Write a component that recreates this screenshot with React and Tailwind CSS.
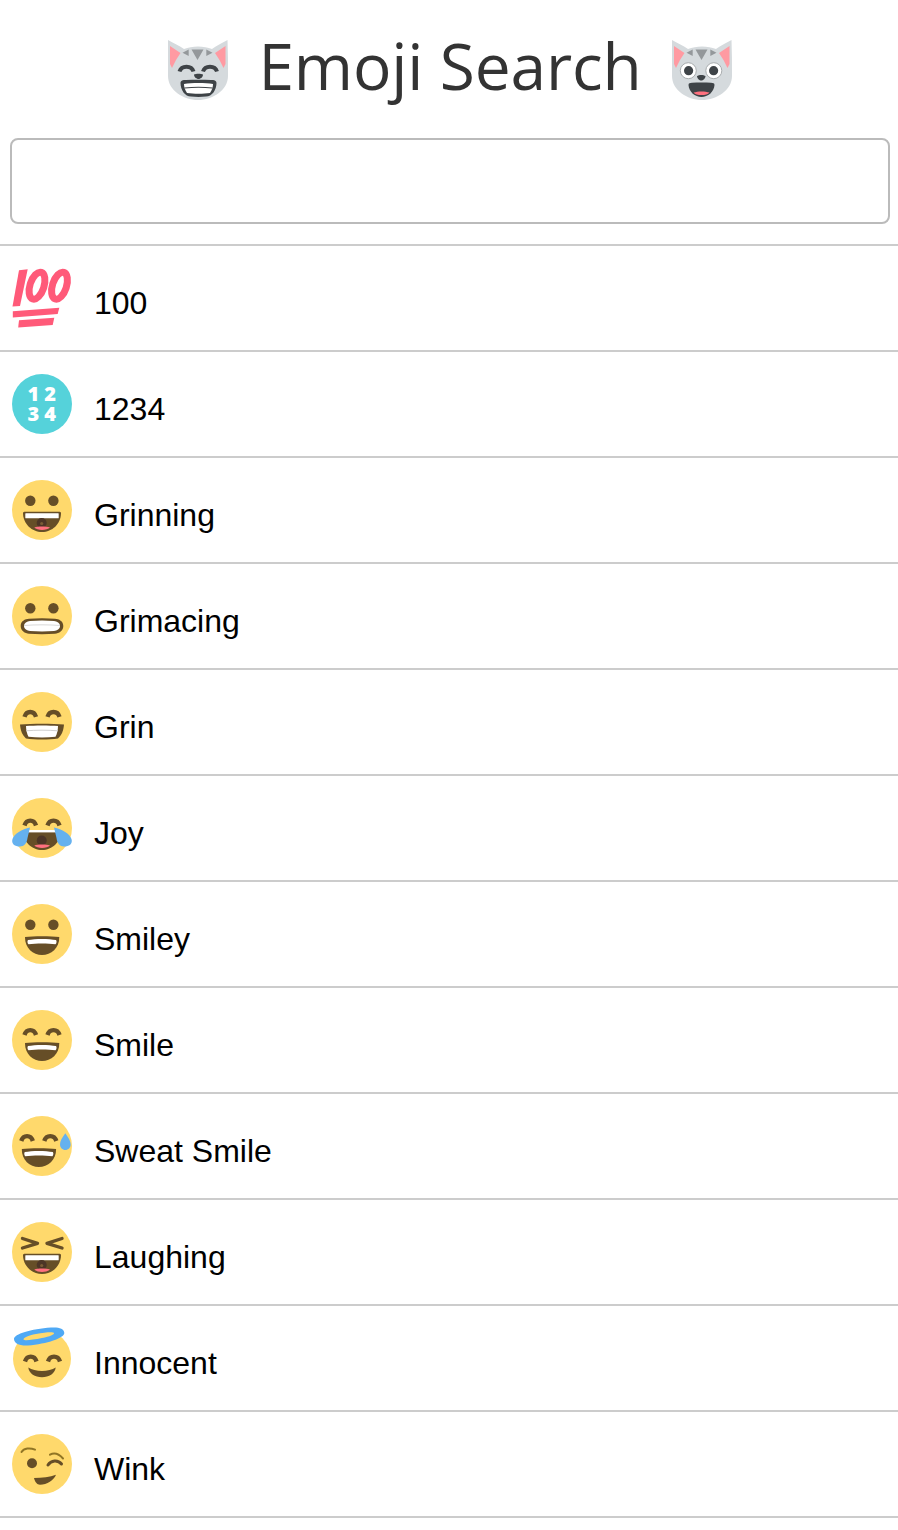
import React from 'react';

const Y = '#ffd96c';
const B = '#664e27';
const Face = ({ children }) => (
  <svg viewBox="0 0 60 60" className="w-[60px] h-[60px] shrink-0 overflow-visible">
    <circle cx="30" cy="30" r="30" fill={Y} />
    {children}
  </svg>
);

const DotEyes = ({ y = 20.7 }) => (
  <>
    <circle cx="18.3" cy={y} r="5.2" fill={B} />
    <circle cx="41.4" cy={y} r="5.2" fill={B} />
  </>
);

const ArcEyes = ({ y = 25.5 }) => (
  <g fill="none" stroke={B} strokeWidth="4.4">
    <path d={`M12.5 ${y - 0.5}C14.500 ${y - 7} 22 ${y - 7} 24 ${y - 0.5}`} />
    <path d={`M35.5 ${y - 0.5}C37.500 ${y - 7} 45.500 ${y - 7} 47.5 ${y - 0.5}`} />
  </g>
);

const OpenMouth = () => (
  <>
    <path d="M11 33C11 32 12 31.700 13 31.700L47 31.700C48 31.700 49 32 49 33C49 44 40 52 30 52C20 52 11 44 11 33Z" fill={B} />
    <rect x="13.300" y="33.300" width="33.400" height="5" rx="0.500" fill="#fff" />
    <circle cx="29.700" cy="43" r="5" fill="#4c3526" />
    <circle cx="29.700" cy="43.500" r="1.600" fill="#7a5c36" />
    <path d="M22.300 47.500C26 46.300 34 46.300 38 47.500C35 50.800 25 50.800 22.300 47.500Z" fill="#ff717f" />
  </>
);

const SmileMouth = () => (
  <>
    <path d="M13 33C21 32 39 32 47.300 33C47.500 44 39 51 30 51C21 51 12.800 44 13 33Z" fill={B} />
    <path d="M16 36C23 34.500 37 34.500 44 36C45 37 44.500 39.500 43.500 40.300C36 39.300 24 39.300 16.500 40.300C15.500 39.500 15 37 16 36Z" fill="#fff" />
  </>
);

const Hundred = () => (
  <svg viewBox="0 0 60 60" className="w-[60px] h-[60px] shrink-0 overflow-visible">
    <g fill="#ff5a79">
      <path d="M7 2.300L15.700 1.300L8 38L0.500 38.500Z" />
      <path d="M0.800 43.300L47.300 39.800L45.700 46L0.800 49.500Z" />
      <path d="M7 52.300L42.300 49.800L40.700 57L6.200 59.500Z" />
    </g>
    <g fill="none" stroke="#ff5a79" strokeWidth="7">
      <ellipse cx="25" cy="17.700" rx="7" ry="14" transform="rotate(18 25 17.700)" />
      <ellipse cx="47.500" cy="17.700" rx="7" ry="14" transform="rotate(18 47.500 17.700)" />
    </g>
  </svg>
);

const Numbers = () => (
  <svg viewBox="0 0 60 60" className="w-[60px] h-[60px] shrink-0">
    <circle cx="30" cy="30" r="30" fill="#55d2da" />
    <g fill="#fff" fontFamily="'Open Sans', sans-serif" fontWeight="800" fontSize="20" textAnchor="middle">
      <text x="29.700" y="27">1 2</text>
      <text x="29.700" y="47">3 4</text>
    </g>
  </svg>
);

const Grimace = () => (
  <Face>
    <DotEyes y={22.300} />
    <path d="M8.700 40C8.700 35 13 33 17 32.700C25 32 35 32 43 32.700C47 33 51.300 35 51.300 40C51.300 45 47 47.300 43 47.700C35 48.300 25 48.300 17 47.700C13 47.300 8.700 45 8.700 40Z" fill={B} />
    <path d="M12 40C12 37 15 35.300 18 35C26 34.300 34 34.300 42 35C45 35.300 48 37 48 40C48 43 45 44.700 42 45C34 45.600 26 45.600 18 45C15 44.700 12 43 12 40Z" fill="#fff" />
    <path d="M12 39.500C24 38.600 36 38.600 48 39.500" stroke="#d9d9d9" strokeWidth="1" fill="none" />
  </Face>
);

const Grin = () => (
  <Face>
    <ArcEyes y={25.300} />
    <path d="M8 32.500C20 31.500 40 31.500 52 32.500C51.500 38 50 43 46 46.500C37 47.800 23 47.800 14 46.500C10 43 8.500 38 8 32.500Z" fill={B} />
    <path d="M14 34C23 33.200 37 33.200 46 34C46 38 45 42 43.500 44.800C35 45.800 25 45.800 16.500 44.800C15 42 14 38 14 34Z" fill="#fff" />
    <path d="M14 38.800C24 38 36 38 46 38.800" stroke="#d0d0d0" strokeWidth="1" fill="none" />
  </Face>
);

const Joy = () => (
  <Face>
    <ArcEyes y={28} />
    <path d="M11 32C20 32 40 32 49 32C49.500 44 40 52 30 52C20 52 10.500 44 11 32Z" fill={B} />
    <rect x="14" y="32" width="32" height="2.400" fill="#fff" />
    <circle cx="29.700" cy="42.500" r="5" fill="#4c3526" />
    <path d="M22.300 47.500C26 46.300 34 46.300 38 47.500C35 50.800 25 50.800 22.300 47.500Z" fill="#ff717f" />
    <g fill="#65b1ef">
      <path d="M18 29.500C10 31 2 36 0.500 41C-1 46 3 48.500 8 48.500C12 48.500 15 45 15.500 40Z" />
      <path d="M42 29.500C50 31 58 36 59.500 41C61 46 57 48.500 52 48.500C48 48.500 45 45 44.500 40Z" />
    </g>
  </Face>
);

const Smiley = () => (
  <Face>
    <DotEyes y={20.700} />
    <SmileMouth />
  </Face>
);

const Smile = () => (
  <Face>
    <ArcEyes />
    <SmileMouth />
  </Face>
);

const SweatSmile = () => (
  <Face>
    <g transform="translate(-3.200 0)">
      <ArcEyes />
      <SmileMouth />
    </g>
    <path d="M53.300 17.300C50 22 48 25 48 28.500C48 31.500 50.500 34 53.300 34C56.200 34 58.700 31.500 58.700 28.500C58.700 25 56.500 22 53.300 17.300Z" fill="#65b1ef" />
  </Face>
);

const Laughing = () => (
  <Face>
    <g fill="none" stroke={B} strokeWidth="3.400" strokeLinecap="round" strokeLinejoin="round">
      <path d="M10.500 16.500L25.500 21.300L10.500 26" />
      <path d="M50 16.500L35 21.300L50 26" />
    </g>
    <OpenMouth />
  </Face>
);

const Innocent = () => (
  <svg viewBox="0 0 60 60" className="w-[60px] h-[60px] shrink-0 overflow-visible">
    <circle cx="30" cy="30.700" r="29" fill={Y} />
    <g transform="translate(0.500 8.500)">
      <ArcEyes />
    </g>
    <path d="M16.300 39.500C23 44 37 44 43.700 39.500C43 45.500 37 49.300 30 49.300C23 49.300 17 45.500 16.300 39.500Z" fill={B} />
    <path fillRule="evenodd" d="M2 11C2 6 19 1 39 -0.500C46 -1 52.300 0 52.300 5C52.300 10 35 16 16 17.500C7 18 2 15 2 11ZM11.500 11.500C12.500 13 20 12 30 10C38 8.500 42.500 6.500 42 5C41.500 3.500 34 4 24 6C16 7.500 11 10 11.500 11.500Z" fill="#4fa9f5" />
  </svg>
);

const Wink = () => (
  <Face>
    <circle cx="20" cy="29.300" r="5" fill={B} />
    <g fill="none" stroke="#917524" strokeWidth="2" strokeLinecap="round">
      <path d="M9.500 18C12 14 18 13.500 23 15.700" />
      <path d="M38 20.700C42 18.500 47 20 51 24.500" />
    </g>
    <path d="M36 31C39 26 46 25.500 49.500 30" fill="none" stroke={B} strokeWidth="3" strokeLinecap="round" />
    <path d="M22 44C30 44 38 43 44 40.700C42 46 35 50.700 28 50.700C25 50.700 23 48 22 44Z" fill={B} />
  </Face>
);

const Grinning = () => (
  <Face>
    <DotEyes />
    <OpenMouth />
  </Face>
);

const CatHead = ({ children }) => (
  <svg viewBox="0 0 60 60" className="w-[60px] h-[60px] shrink-0 overflow-visible">
    <path d="M0 0C5 3 12 6 16 9C24 5.500 36 5.500 44 9C48 6 54 3 59.500 0C60 12 60 24 60 36C60 50 45 60 30 60C15 60 0 50 0 36C0 24 0 12 0 0Z" fill="#d5dadd" />
    <path d="M2 6L12.500 13L8 20L4 28L2 24Z" fill="#ff9aa2" />
    <path d="M57.500 6L47 13L51.500 20L55.500 28L57.500 24Z" fill="#ff9aa2" />
    <g fill="#94989b">
      <path d="M23.500 9.500L35.500 9.500L29.500 20Z" />
      <path d="M14.500 12.800L20.700 9.500L20.700 16Z" />
      <path d="M44.500 12.800L38.300 9.500L38.300 16Z" />
    </g>
    {children}
  </svg>
);

const CatGrin = () => (
  <CatHead>
    <g fill="none" stroke="#3e4347" strokeWidth="4">
      <path d="M11.500 31.500C13.500 25 23.500 25 25.500 31.500" />
      <path d="M35 31.500C37 25 47 25 49 31.500" />
    </g>
    <g fill="#3e4347">
      <path d="M26 34.500C28 33.500 33 33.500 35 34.500C35 37.500 32 39 30.500 39C29 39 26 37.500 26 34.500Z" />
      <path d="M12.500 43C12.500 40.500 15 40 18 40C26 39.500 35 39.500 43 40C46 40 48.500 40.500 48.500 43C48.500 50 44 56.500 38 56.500C33 57 28 57 23 56.500C17 56.500 12.500 50 12.500 43Z" />
    </g>
    <path d="M16 44C24 42.800 37 42.800 45 44C45 47 44 50 42 53C35 54 26 54 19 53C17 50 16 47 16 44Z" fill="#fff" />
    <path d="M16.500 48C26 47 35 47 44.500 48" stroke="#3e4347" strokeWidth="1.200" fill="none" />
  </CatHead>
);

const CatSmile = () => (
  <CatHead>
    <circle cx="16.300" cy="30.700" r="8" fill="#fff" stroke="#a8acae" strokeWidth="1" />
    <circle cx="41.800" cy="30.700" r="8" fill="#fff" stroke="#a8acae" strokeWidth="1" />
    <circle cx="16.600" cy="30.700" r="4.600" fill="#3e4347" />
    <circle cx="41.600" cy="30.700" r="4.600" fill="#3e4347" />
    <path d="M25 36C27 34.500 31.500 34.500 33.500 36C33.500 38.500 31 40.500 29.200 40.500C27.500 40.500 25 38.500 25 36Z" fill="#3e4347" />
    <path d="M16.500 45C16.500 43 18 43 20 42.800C26 42.300 33 42.300 39 42.800C41 43 42.500 43 42.500 45C42 52 36 57 29.500 57C23 57 17 52 16.500 45Z" fill="#3e4347" />
    <path d="M21.500 52.500C26 51 33 51 37.500 52.500C36 54.500 33 55 29.500 55C26 55 23 54.500 21.500 52.500Z" fill="#ff717f" />
  </CatHead>
);

const emojis = [
  { title: '100', icon: <Hundred /> },
  { title: '1234', icon: <Numbers /> },
  { title: 'Grinning', icon: <Grinning /> },
  { title: 'Grimacing', icon: <Grimace /> },
  { title: 'Grin', icon: <Grin /> },
  { title: 'Joy', icon: <Joy /> },
  { title: 'Smiley', icon: <Smiley /> },
  { title: 'Smile', icon: <Smile /> },
  { title: 'Sweat Smile', icon: <SweatSmile /> },
  { title: 'Laughing', icon: <Laughing /> },
  { title: 'Innocent', icon: <Innocent /> },
  { title: 'Wink', icon: <Wink /> },
];

const App = () => {
  return (
    <div className="min-h-[1530px] bg-white font-['Liberation_Sans',sans-serif]">
      <header className="flex items-center justify-center gap-[30px] h-[138px] pt-[2px] pl-[2px]">
        <CatGrin />
        <h1 className="font-['Open_Sans',sans-serif] text-[64px] tracking-[-0.15px] leading-none text-[#333] mb-[8px]">Emoji Search</h1>
        <CatSmile />
      </header>

      <div className="pl-[10px] pr-[8px] pb-5">
        <input
          type="text"
          className="block w-full h-[86px] border-2 border-[#bbbbbb] rounded-lg bg-white outline-none px-4 text-[32px]"
        />
      </div>

      <div className="border-t-2 border-[#cccccc]">
        {emojis.map((emoji) => (
          <div key={emoji.title} className="flex items-center h-[106px] pl-3 gap-[22px] border-b-2 border-[#cccccc]">
            {emoji.icon}
            <span className="text-[32px] text-black pt-[10px]">{emoji.title}</span>
          </div>
        ))}
      </div>
    </div>
  );
};

export default App;
